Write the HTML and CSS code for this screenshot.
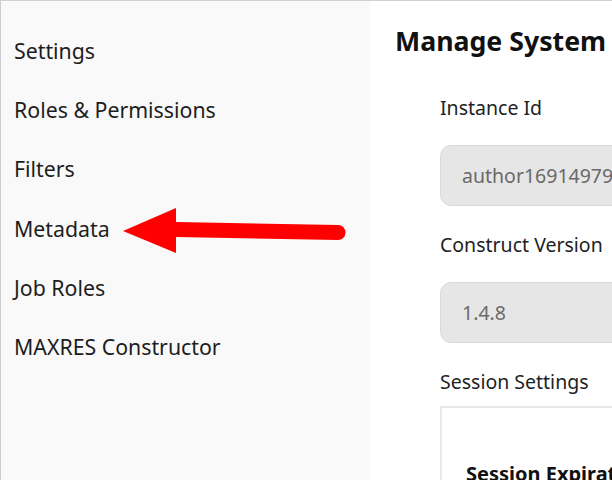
FILE: index.html
```html
<!DOCTYPE html>
<html>
<head>
<meta charset="utf-8">
<link rel="stylesheet" href="styles.css">
</head>
<body>
<div class="page">
  <nav class="sidebar">
    <ul class="menu">
      <li>Settings</li>
      <li>Roles &amp; Permissions</li>
      <li>Filters</li>
      <li>Metadata</li>
      <li>Job Roles</li>
      <li>MAXRES Constructor</li>
    </ul>
  </nav>
  <main class="main">
    <h1 class="title">Manage System</h1>
    <div class="form">
      <label class="label">Instance Id</label>
      <div class="input">author16914979</div>
      <label class="label">Construct Version</label>
      <div class="input">1.4.8</div>
      <label class="label">Session Settings</label>
      <div class="panel">
        <div class="panel-title">Session Expiration</div>
      </div>
    </div>
  </main>
  <svg class="arrow" width="240" height="60" viewBox="0 0 240 60">
    <line x1="56" y1="28.5" x2="218" y2="31.5" stroke="#ff0000" stroke-width="15" stroke-linecap="round"/>
    <polygon points="3,30 56,7 56,52" fill="#ff0000"/>
  </svg>
</div>
</body>
</html>
```
FILE: styles.css
```css
html, body {
  margin: 0;
  padding: 0;
}
body {
  font-family: "Noto Sans", "Open Sans", sans-serif;
  color: #222;
  background: #fff;
  width: 612px;
  height: 480px;
  overflow: hidden;
}
.page {
  position: relative;
  display: flex;
  height: 480px;
  border-top: 1px solid #d0d0d0;
  box-sizing: border-box;
}
.sidebar {
  width: 369px;
  flex: none;
  background: #f9f9f9;
  border-left: 1px solid #cccccc;
}
.menu {
  list-style: none;
  margin: 0;
  padding: 35px 0 0 13px;
}
.menu li {
  font-size: 21.3px;
  line-height: 29px;
  height: 59.2px;
  color: #1d1d1d;
}
.main {
  flex: 1;
  padding-left: 25px;
  white-space: nowrap;
  overflow: hidden;
}
.title {
  font-size: 26.7px;
  font-weight: 700;
  color: #111;
  margin: 22px 0 0 0;
  line-height: 36px;
}
.form {
  margin-left: 45px;
  display: flex;
  flex-direction: column;
  padding-top: 35px;
}
.label {
  font-size: 19.5px;
  line-height: 28px;
  color: #222;
  margin-bottom: 23px;
}
.input {
  box-sizing: border-box;
  height: 61px;
  width: 300px;
  background: #e6e6e6;
  border: 1px solid #dadada;
  border-radius: 11px;
  padding-left: 21px;
  font-size: 19.5px;
  line-height: 59px;
  color: #6a6a6a;
  margin-bottom: 25px;
}
.panel {
  box-sizing: border-box;
  width: 300px;
  height: 120px;
  border: 2px solid #e8e8e8;
  background: #fff;
  margin-top: -13px;
  padding: 52px 0 0 24px;
}
.panel-title {
  font-size: 20px;
  line-height: 28px;
  font-weight: 700;
  color: #111;
}
.arrow {
  position: absolute;
  left: 120px;
  top: 200px;
}
```
